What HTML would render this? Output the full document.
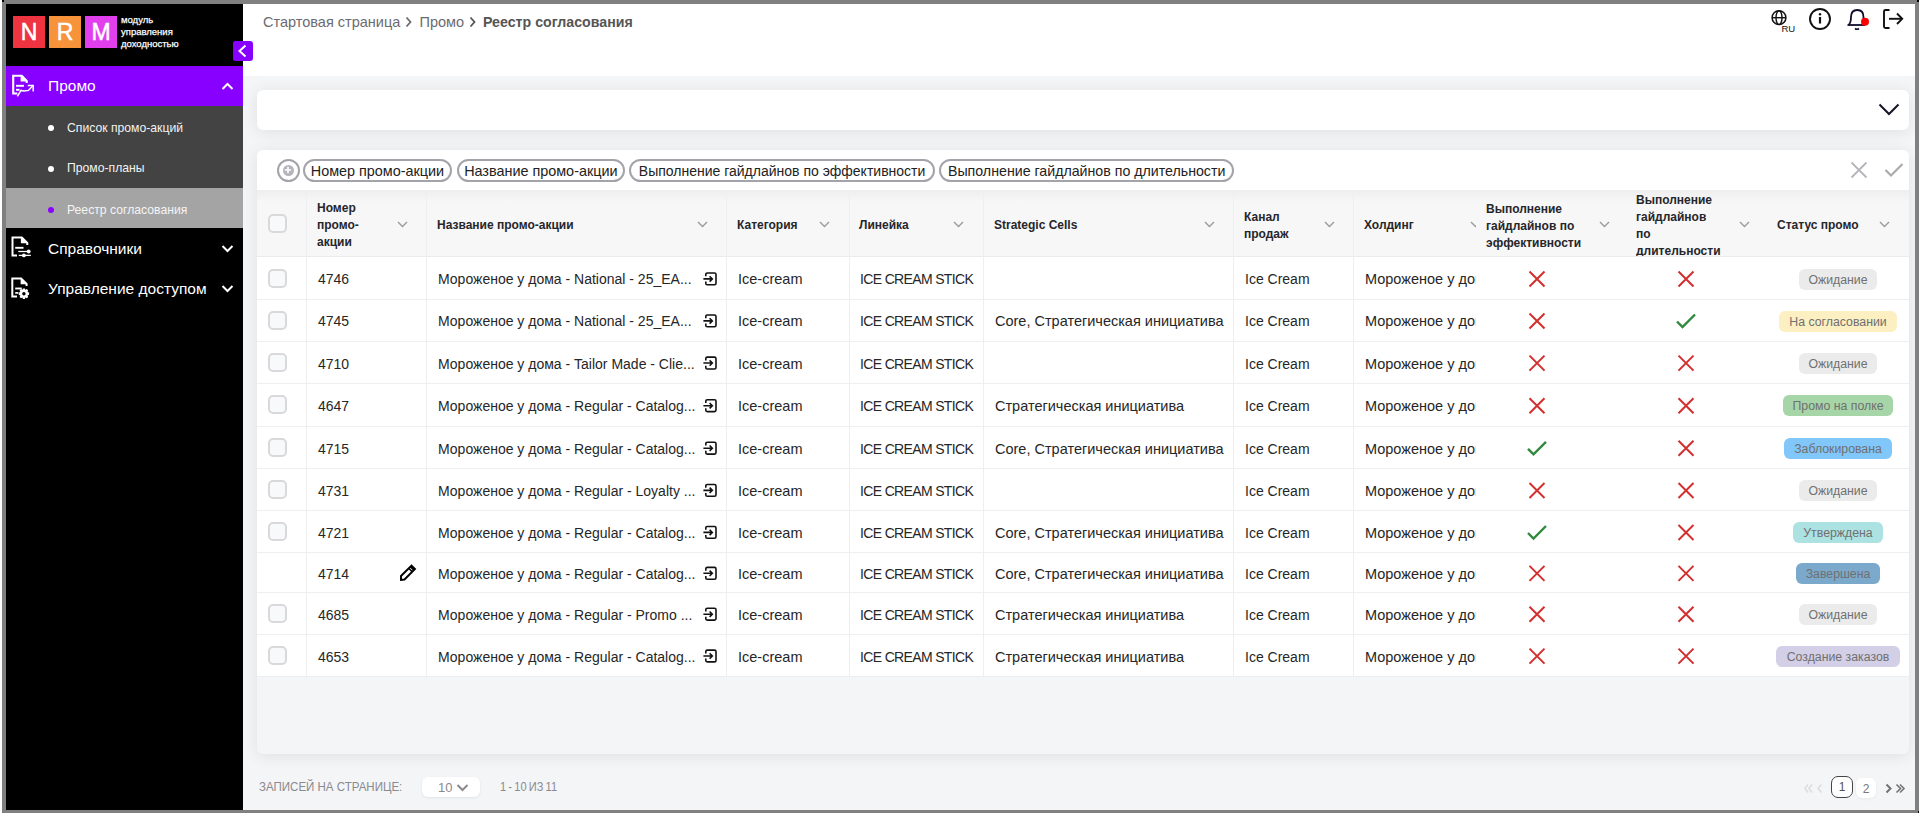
<!DOCTYPE html><html><head><meta charset="utf-8"><style>
*{box-sizing:border-box;margin:0;padding:0}
html,body{width:1920px;height:813px;overflow:hidden;background:#fff;font-family:"Liberation Sans",sans-serif;}
div,span{position:absolute;white-space:nowrap}
svg{position:absolute;overflow:visible}
.logo{top:16px;width:32px;height:32px;color:#fff;font-size:23px;line-height:32px;text-align:center;-webkit-text-stroke:0.5px #fff}
.nav{color:#fff;font-size:15.5px;line-height:18px}
.sub{color:#fff;font-size:12.2px;line-height:15px}
.bullet{width:6px;height:6px;border-radius:50%;background:#fff}
.chip{height:23px;border:2px solid #a3a3aa;border-radius:12px;font-size:14.4px;line-height:20px;color:#222;text-align:center}
.th{font-size:12px;font-weight:bold;line-height:17px;color:#26262b}
.td{font-size:14px;line-height:17px;color:#262626}
.cb{width:19px;height:19px;border:2px solid #d9d9dc;border-radius:5px;background:#f8f9fb}
.badge{height:21px;border-radius:6px;font-size:12.3px;line-height:23px;color:#707070;text-align:center}
</style></head><body>
<div style="left:2px;top:0;width:1917px;height:813px;background:#808080"></div>
<div style="left:6px;top:4px;width:237px;height:806px;background:#000"></div>
<div class="logo" style="left:13px;background:#ee3441">N</div>
<div class="logo" style="left:49px;background:#f7933b">R</div>
<div class="logo" style="left:85px;background:#e13fee">M</div>
<div style="left:121px;top:14px;color:#fff;font-size:9.5px;line-height:12px;-webkit-text-stroke:0.25px #fff">модуль<br>управления<br>доходностью</div>
<div style="left:6px;top:66px;width:237px;height:40px;background:#8800ff"></div>
<div style="left:6px;top:106px;width:237px;height:82px;background:#434343"></div>
<div style="left:6px;top:188px;width:237px;height:40px;background:#a4a4a4"></div>
<div style="left:233px;top:41px;width:20px;height:20px;background:#8800ff;border-radius:3px"></div>
<svg style="left:0;top:0" width="1" height="1"><polyline points="245.5,45.5 239.5,51 245.5,56.5" fill="none" stroke="#fff" stroke-width="2"/></svg>
<svg style="left:10px;top:73px" width="25" height="25" viewBox="0 0 25 25" fill="none" stroke="#fff">
<path d="M7.4 20.5 H3.2 V2.8 H11.8 L16.7 7.9 V10" stroke-width="2.1"/>
<path d="M10.6 3 L12 3 L17.5 8.4 L10.6 8.4 Z" fill="#fff" stroke="none"/>
<path d="M6 12.8 H14" stroke-width="1.9"/><path d="M6 16.8 H9.6" stroke-width="1.9"/>
<polyline points="7.4,23.3 11,17.4 14,17.9 18.5,17.4 23,12.6" stroke-width="1.5"/>
<polyline points="17.8,12.4 23.2,12.4 23.2,18.6" stroke-width="1.5"/>
</svg>
<div class="nav" style="left:48px;top:77px">Промо</div>
<svg style="left:0;top:0" width="1" height="1"><polyline points="222.5,89 227.5,84 232.5,89" fill="none" stroke="#fff" stroke-width="2"/></svg>
<div class="bullet" style="left:48px;top:125.0px;background:#fff"></div>
<div class="sub" style="left:67px;top:120.7px;color:#f2f2f2">Список промо-акций</div>
<div class="bullet" style="left:48px;top:165.5px;background:#fff"></div>
<div class="sub" style="left:67px;top:161.2px;color:#f2f2f2">Промо-планы</div>
<div class="bullet" style="left:48px;top:207.0px;background:#8800ff"></div>
<div class="sub" style="left:67px;top:202.7px;color:#f4f4f4">Реестр согласования</div>
<svg style="left:8px;top:232px" width="28" height="28" viewBox="0 0 28 28" fill="none" stroke="#fff">
<path d="M9 23.6 H4.5 V5.4 H13.8 L19.3 11 V13" stroke-width="2"/>
<path d="M12.9 5.6 L14 5.6 L19.3 11.3 L12.9 11.3 Z" fill="#fff" stroke="none"/>
<path d="M7.2 15.8 H15.5" stroke-width="1.9"/>
<path d="M10.3 19.5 H20" stroke-width="1.3"/><circle cx="20.7" cy="19.5" r="1.9" fill="#fff" stroke="none"/>
<path d="M10.7 23.4 H22.8" stroke-width="1.3"/><circle cx="15.9" cy="23.4" r="1.9" fill="#fff" stroke="none"/>
</svg>
<div class="nav" style="left:48px;top:240px">Справочники</div>
<svg style="left:0;top:0" width="1" height="1"><polyline points="222.5,246 227.5,251 232.5,246" fill="none" stroke="#fff" stroke-width="2"/></svg>
<svg style="left:8px;top:273px" width="28" height="28" viewBox="0 0 28 28" fill="none" stroke="#fff">
<path d="M9 23.6 H4.3 V5.5 H13.1 L18.6 11 V13" stroke-width="2"/>
<path d="M12.6 5.7 L13.5 5.7 L18.8 11.2 L12.6 11.2 Z" fill="#fff" stroke="none"/>
<path d="M7.2 15.5 H13.8" stroke-width="1.9"/><path d="M7.2 19.9 H10.3" stroke-width="1.7"/>
<g transform="translate(15.9,20.7)"><path d="M-1,-5.3 H1 L1.4,-3.9 L2.9,-4.6 L4.3,-3.2 L3.6,-1.7 L5.2,-1.1 V1.1 L3.6,1.7 L4.3,3.2 L2.9,4.6 L1.4,3.9 L1,5.3 H-1 L-1.4,3.9 L-2.9,4.6 L-4.3,3.2 L-3.6,1.7 L-5.2,1.1 V-1.1 L-3.6,-1.7 L-4.3,-3.2 L-2.9,-4.6 L-1.4,-3.9 Z" fill="#fff" stroke="none"/><circle r="1.7" fill="#000" stroke="none"/></g>
</svg>
<div class="nav" style="left:48px;top:280px">Управление доступом</div>
<svg style="left:0;top:0" width="1" height="1"><polyline points="222.5,286 227.5,291 232.5,286" fill="none" stroke="#fff" stroke-width="2"/></svg>
<div style="left:243px;top:4px;width:1672px;height:806px;background:#f4f5f7;overflow:hidden"></div>
<div style="left:243px;top:4px;width:1672px;height:72px;background:#fff"></div>
<div style="left:263px;top:13px;font-size:14.5px;line-height:18px;color:#6b6b70">Стартовая страница</div>
<svg style="left:0;top:0" width="1" height="1"><polyline points="406.5,17.5 410.5,22 406.5,26.5" fill="none" stroke="#6b6b70" stroke-width="1.8"/></svg>
<div style="left:419.5px;top:13px;font-size:14.5px;line-height:18px;color:#6b6b70">Промо</div>
<svg style="left:0;top:0" width="1" height="1"><polyline points="470.5,17.5 474.5,22 470.5,26.5" fill="none" stroke="#555" stroke-width="1.8"/></svg>
<div style="left:483px;top:13px;font-size:14.2px;line-height:18px;color:#555;font-weight:bold">Реестр согласования</div>
<svg style="left:1765px;top:5px" width="150" height="30" viewBox="1765 5 150 30" fill="none" stroke="#111">
<circle cx="1779" cy="17.7" r="6.9" stroke-width="1.5"/><ellipse cx="1779" cy="17.7" rx="3" ry="6.9" stroke-width="1.4"/><path d="M1772.2 17.7 H1785.8" stroke-width="1.4"/>
<circle cx="1820" cy="19" r="10" stroke-width="1.9"/><path d="M1820 17 V23.5" stroke-width="2.2"/><circle cx="1820" cy="14.3" r="1.2" fill="#111" stroke="none"/>
<path d="M1848.5 25 Q1851 23 1851 17 Q1851 10 1857.3 10 Q1863.5 10 1863.5 17 L1863.5 19" stroke="#0d0d2b" stroke-width="1.8"/><path d="M1847.5 25 H1865" stroke="#0d0d2b" stroke-width="1.8"/>
<path d="M1855 28.5 Q1857 30 1859 28.5" stroke="#0d0d2b" stroke-width="1.6"/>
<circle cx="1865" cy="21.8" r="4" fill="#f00" stroke="none"/>
<path d="M1889.5 10 H1885.5 Q1884 10 1884 11.5 V26.5 Q1884 28 1885.5 28 H1889.5" stroke-width="1.9"/>
<path d="M1889 18.8 H1902" stroke-width="1.9"/><polyline points="1897,13.5 1902.2,18.8 1897,24" stroke-width="1.9"/>
</svg>
<div style="left:1781.5px;top:24px;font-size:9.5px;line-height:10px;color:#111">RU</div>
<div style="left:243px;top:76px;width:1672px;height:734px;overflow:hidden"><div style="left:14px;top:14px;width:1652px;height:40px;background:#fff;border-radius:6px;box-shadow:0 2px 16px rgba(0,0,0,.09)"></div><div style="left:14px;top:74px;width:1652px;height:604px;background:#f4f5f7;border-radius:6px;box-shadow:0 2px 16px rgba(0,0,0,.09)"></div></div>
<svg style="left:0;top:0" width="1" height="1"><polyline points="1879.5,104.5 1889,114 1898.5,104.5" fill="none" stroke="#15152a" stroke-width="2"/></svg>
<div style="left:257px;top:150px;width:1652px;height:40px;background:#fff;border-radius:6px 6px 0 0"></div>
<div style="left:257px;top:190px;width:1652px;height:67px;background:linear-gradient(#eeeeef,#f7f7f7 12px,#f7f7f7);border-bottom:1px solid #ebebec"></div>
<div style="left:257px;top:257px;width:1652px;height:419px;background:#fff"></div>
<div style="left:277px;top:159px;width:23px;height:23px;border:2px solid #a3a3aa;border-radius:50%"></div>
<div style="left:282.5px;top:164.5px;width:11px;height:11px;border-radius:50%;background:#b4b4ba"></div>
<svg style="left:0;top:0" width="1" height="1"><path d="M288 166.8 V173.2 M284.8 170 H291.2" stroke="#fff" stroke-width="1.6"/></svg>
<div class="chip" style="left:302.8px;top:159px;width:149.3px;font-size:14.4px">Номер промо-акции</div>
<div class="chip" style="left:456.5px;top:159px;width:168.7px;font-size:14.4px">Название промо-акции</div>
<div class="chip" style="left:629.2px;top:159px;width:305.8px;font-size:14px">Выполнение гайдлайнов по эффективности</div>
<div class="chip" style="left:939.2px;top:159px;width:295.0px;font-size:14.2px">Выполнение гайдлайнов по длительности</div>
<svg style="left:0;top:0" width="1" height="1"><path d="M1851.5 162.5 L1866.5 177.5 M1866.5 162.5 L1851.5 177.5" stroke="#b5b5bc" stroke-width="1.8"/><polyline points="1885.5,170 1891,175.5 1902.5,164" fill="none" stroke="#ababab" stroke-width="2.2"/></svg>
<div style="left:306px;top:190px;width:1px;height:486px;background:#efeff1"></div>
<div style="left:426px;top:190px;width:1px;height:486px;background:#efeff1"></div>
<div style="left:726px;top:190px;width:1px;height:486px;background:#efeff1"></div>
<div style="left:849px;top:190px;width:1px;height:486px;background:#efeff1"></div>
<div style="left:983px;top:190px;width:1px;height:486px;background:#efeff1"></div>
<div style="left:1233px;top:190px;width:1px;height:486px;background:#efeff1"></div>
<div style="left:1353px;top:190px;width:1px;height:486px;background:#efeff1"></div>
<div class="cb" style="left:268px;top:214px"></div>
<div class="th" style="left:317px;top:200.0px">Номер<br>промо-<br>акции</div>
<div class="th" style="left:437px;top:217.0px">Название промо-акции</div>
<div class="th" style="left:737px;top:217.0px">Категория</div>
<div class="th" style="left:859px;top:217.0px">Линейка</div>
<div class="th" style="left:994px;top:217.0px">Strategic Cells</div>
<div class="th" style="left:1244px;top:208.5px">Канал<br>продаж</div>
<div class="th" style="left:1364px;top:217.0px">Холдинг</div>
<svg style="left:0;top:0" width="1" height="1"><polyline points="398,222 402.5,226.5 407,222" fill="none" stroke="#9a9aa0" stroke-width="1.4"/></svg>
<svg style="left:0;top:0" width="1" height="1"><polyline points="698,222 702.5,226.5 707,222" fill="none" stroke="#9a9aa0" stroke-width="1.4"/></svg>
<svg style="left:0;top:0" width="1" height="1"><polyline points="820,222 824.5,226.5 829,222" fill="none" stroke="#9a9aa0" stroke-width="1.4"/></svg>
<svg style="left:0;top:0" width="1" height="1"><polyline points="954,222 958.5,226.5 963,222" fill="none" stroke="#9a9aa0" stroke-width="1.4"/></svg>
<svg style="left:0;top:0" width="1" height="1"><polyline points="1205,222 1209.5,226.5 1214,222" fill="none" stroke="#9a9aa0" stroke-width="1.4"/></svg>
<svg style="left:0;top:0" width="1" height="1"><polyline points="1325,222 1329.5,226.5 1334,222" fill="none" stroke="#9a9aa0" stroke-width="1.4"/></svg>
<div class="th" style="left:1486px;top:200.5px">Выполнение<br>гайдлайнов по<br>эффективности</div>
<div class="th" style="left:1636px;top:190px;height:66px;overflow:hidden"><div style="position:relative;top:1.5px">Выполнение<br>гайдлайнов<br>по<br>длительности</div></div>
<div class="th" style="left:1777px;top:217px">Статус промо</div>
<svg style="left:0;top:0" width="1" height="1"><polyline points="1600,222 1604.5,226.5 1609,222" fill="none" stroke="#9a9aa0" stroke-width="1.4"/></svg>
<svg style="left:0;top:0" width="1" height="1"><polyline points="1740,222 1744.5,226.5 1749,222" fill="none" stroke="#9a9aa0" stroke-width="1.4"/></svg>
<svg style="left:0;top:0" width="1" height="1"><polyline points="1880,222 1884.5,226.5 1889,222" fill="none" stroke="#9a9aa0" stroke-width="1.4"/></svg>
<div style="left:1470px;top:215px;width:6px;height:15px;overflow:hidden"><svg style="left:0;top:0" width="1" height="1"><polyline points="1,7 5.5,11.5 10,7" fill="none" stroke="#9a9aa0" stroke-width="1.4"/></svg></div>
<div style="left:257px;top:299px;width:1652px;height:1px;background:#efeff1"></div>
<div class="cb" style="left:268px;top:268.5px"></div>
<div class="td" style="left:318px;top:271.4px">4746</div>
<div class="td" style="left:438px;top:271.4px">Мороженое у дома - National - 25_EA...</div>
<svg style="left:0;top:0" width="1" height="1"><path d="M705.8 276.29999999999995 V274.29999999999995 Q705.8 273.0 707.3 273.0 H714.5 Q716 273.0 716 274.5 V283.29999999999995 Q716 284.79999999999995 714.5 284.79999999999995 H707.3 Q705.8 284.79999999999995 705.8 283.5 V281.5 M703.4 278.9 H712 M709.6 276.2 L712.3 278.9 L709.6 281.59999999999997" fill="none" stroke="#111" stroke-width="1.6"/></svg>
<div class="td" style="left:738px;top:271.4px;font-size:14.5px">Ice-cream</div>
<div class="td" style="left:860px;top:271.4px;letter-spacing:-0.65px">ICE CREAM STICK</div>
<div class="td" style="left:1245px;top:271.4px">Ice Cream</div>
<div style="left:1365px;top:271.4px;width:111px;height:20px;overflow:hidden"><div class="td" style="left:0;top:0;font-size:14.5px">Мороженое у дома</div></div>
<svg style="left:0;top:0" width="1" height="1"><path d="M1529.5 271.5 L1544.5 286.5 M1544.5 271.5 L1529.5 286.5" stroke="#d32f2f" stroke-width="2"/></svg>
<svg style="left:0;top:0" width="1" height="1"><path d="M1678.5 271.5 L1693.5 286.5 M1693.5 271.5 L1678.5 286.5" stroke="#d32f2f" stroke-width="2"/></svg>
<div class="badge" style="left:1799.0px;top:268.5px;width:78px;background:#ebebeb">Ожидание</div>
<div style="left:257px;top:341px;width:1652px;height:1px;background:#efeff1"></div>
<div class="cb" style="left:268px;top:310.5px"></div>
<div class="td" style="left:318px;top:313.4px">4745</div>
<div class="td" style="left:438px;top:313.4px">Мороженое у дома - National - 25_EA...</div>
<svg style="left:0;top:0" width="1" height="1"><path d="M705.8 318.29999999999995 V316.29999999999995 Q705.8 315.0 707.3 315.0 H714.5 Q716 315.0 716 316.5 V325.29999999999995 Q716 326.79999999999995 714.5 326.79999999999995 H707.3 Q705.8 326.79999999999995 705.8 325.5 V323.5 M703.4 320.9 H712 M709.6 318.2 L712.3 320.9 L709.6 323.59999999999997" fill="none" stroke="#111" stroke-width="1.6"/></svg>
<div class="td" style="left:738px;top:313.4px;font-size:14.5px">Ice-cream</div>
<div class="td" style="left:860px;top:313.4px;letter-spacing:-0.65px">ICE CREAM STICK</div>
<div class="td" style="left:995px;top:313.4px;font-size:14.5px">Core, Стратегическая инициатива</div>
<div class="td" style="left:1245px;top:313.4px">Ice Cream</div>
<div style="left:1365px;top:313.4px;width:111px;height:20px;overflow:hidden"><div class="td" style="left:0;top:0;font-size:14.5px">Мороженое у дома</div></div>
<svg style="left:0;top:0" width="1" height="1"><path d="M1529.5 313.5 L1544.5 328.5 M1544.5 313.5 L1529.5 328.5" stroke="#d32f2f" stroke-width="2"/></svg>
<svg style="left:0;top:0" width="1" height="1"><polyline points="1677,321.5 1682.5,327.0 1695,314.5" fill="none" stroke="#2f8a3e" stroke-width="2.4"/></svg>
<div class="badge" style="left:1779.0px;top:310.5px;width:118px;background:#fcefc2">На согласовании</div>
<div style="left:257px;top:383px;width:1652px;height:1px;background:#efeff1"></div>
<div class="cb" style="left:268px;top:352.6px"></div>
<div class="td" style="left:318px;top:355.54999999999995px">4710</div>
<div class="td" style="left:438px;top:355.54999999999995px">Мороженое у дома - Tailor Made - Clie...</div>
<svg style="left:0;top:0" width="1" height="1"><path d="M705.8 360.44999999999993 V358.44999999999993 Q705.8 357.15 707.3 357.15 H714.5 Q716 357.15 716 358.65 V367.44999999999993 Q716 368.94999999999993 714.5 368.94999999999993 H707.3 Q705.8 368.94999999999993 705.8 367.65 V365.65 M703.4 363.04999999999995 H712 M709.6 360.34999999999997 L712.3 363.04999999999995 L709.6 365.74999999999994" fill="none" stroke="#111" stroke-width="1.6"/></svg>
<div class="td" style="left:738px;top:355.54999999999995px;font-size:14.5px">Ice-cream</div>
<div class="td" style="left:860px;top:355.54999999999995px;letter-spacing:-0.65px">ICE CREAM STICK</div>
<div class="td" style="left:1245px;top:355.54999999999995px">Ice Cream</div>
<div style="left:1365px;top:355.54999999999995px;width:111px;height:20px;overflow:hidden"><div class="td" style="left:0;top:0;font-size:14.5px">Мороженое у дома</div></div>
<svg style="left:0;top:0" width="1" height="1"><path d="M1529.5 355.65 L1544.5 370.65 M1544.5 355.65 L1529.5 370.65" stroke="#d32f2f" stroke-width="2"/></svg>
<svg style="left:0;top:0" width="1" height="1"><path d="M1678.5 355.65 L1693.5 370.65 M1693.5 355.65 L1678.5 370.65" stroke="#d32f2f" stroke-width="2"/></svg>
<div class="badge" style="left:1799.0px;top:352.65px;width:78px;background:#ebebeb">Ожидание</div>
<div style="left:257px;top:426px;width:1652px;height:1px;background:#efeff1"></div>
<div class="cb" style="left:268px;top:395.3px"></div>
<div class="td" style="left:318px;top:398.2px">4647</div>
<div class="td" style="left:438px;top:398.2px">Мороженое у дома - Regular - Catalog...</div>
<svg style="left:0;top:0" width="1" height="1"><path d="M705.8 403.09999999999997 V401.09999999999997 Q705.8 399.8 707.3 399.8 H714.5 Q716 399.8 716 401.3 V410.09999999999997 Q716 411.59999999999997 714.5 411.59999999999997 H707.3 Q705.8 411.59999999999997 705.8 410.3 V408.3 M703.4 405.7 H712 M709.6 403.0 L712.3 405.7 L709.6 408.4" fill="none" stroke="#111" stroke-width="1.6"/></svg>
<div class="td" style="left:738px;top:398.2px;font-size:14.5px">Ice-cream</div>
<div class="td" style="left:860px;top:398.2px;letter-spacing:-0.65px">ICE CREAM STICK</div>
<div class="td" style="left:995px;top:398.2px;font-size:14.5px">Стратегическая инициатива</div>
<div class="td" style="left:1245px;top:398.2px">Ice Cream</div>
<div style="left:1365px;top:398.2px;width:111px;height:20px;overflow:hidden"><div class="td" style="left:0;top:0;font-size:14.5px">Мороженое у дома</div></div>
<svg style="left:0;top:0" width="1" height="1"><path d="M1529.5 398.3 L1544.5 413.3 M1544.5 398.3 L1529.5 413.3" stroke="#d32f2f" stroke-width="2"/></svg>
<svg style="left:0;top:0" width="1" height="1"><path d="M1678.5 398.3 L1693.5 413.3 M1693.5 398.3 L1678.5 413.3" stroke="#d32f2f" stroke-width="2"/></svg>
<div class="badge" style="left:1783.0px;top:395.3px;width:110px;background:#a6d5a8">Промо на полке</div>
<div style="left:257px;top:468px;width:1652px;height:1px;background:#efeff1"></div>
<div class="cb" style="left:268px;top:437.8px"></div>
<div class="td" style="left:318px;top:440.7px">4715</div>
<div class="td" style="left:438px;top:440.7px">Мороженое у дома - Regular - Catalog...</div>
<svg style="left:0;top:0" width="1" height="1"><path d="M705.8 445.59999999999997 V443.59999999999997 Q705.8 442.3 707.3 442.3 H714.5 Q716 442.3 716 443.8 V452.59999999999997 Q716 454.09999999999997 714.5 454.09999999999997 H707.3 Q705.8 454.09999999999997 705.8 452.8 V450.8 M703.4 448.2 H712 M709.6 445.5 L712.3 448.2 L709.6 450.9" fill="none" stroke="#111" stroke-width="1.6"/></svg>
<div class="td" style="left:738px;top:440.7px;font-size:14.5px">Ice-cream</div>
<div class="td" style="left:860px;top:440.7px;letter-spacing:-0.65px">ICE CREAM STICK</div>
<div class="td" style="left:995px;top:440.7px;font-size:14.5px">Core, Стратегическая инициатива</div>
<div class="td" style="left:1245px;top:440.7px">Ice Cream</div>
<div style="left:1365px;top:440.7px;width:111px;height:20px;overflow:hidden"><div class="td" style="left:0;top:0;font-size:14.5px">Мороженое у дома</div></div>
<svg style="left:0;top:0" width="1" height="1"><polyline points="1528,448.8 1533.5,454.3 1546,441.8" fill="none" stroke="#2f8a3e" stroke-width="2.4"/></svg>
<svg style="left:0;top:0" width="1" height="1"><path d="M1678.5 440.8 L1693.5 455.8 M1693.5 440.8 L1678.5 455.8" stroke="#d32f2f" stroke-width="2"/></svg>
<div class="badge" style="left:1784.0px;top:437.8px;width:108px;background:#81c7f9">Заблокирована</div>
<div style="left:257px;top:510px;width:1652px;height:1px;background:#efeff1"></div>
<div class="cb" style="left:268px;top:480.0px"></div>
<div class="td" style="left:318px;top:482.85px">4731</div>
<div class="td" style="left:438px;top:482.85px">Мороженое у дома - Regular - Loyalty ...</div>
<svg style="left:0;top:0" width="1" height="1"><path d="M705.8 487.75 V485.75 Q705.8 484.45000000000005 707.3 484.45000000000005 H714.5 Q716 484.45000000000005 716 485.95000000000005 V494.75 Q716 496.25 714.5 496.25 H707.3 Q705.8 496.25 705.8 494.95000000000005 V492.95000000000005 M703.4 490.35 H712 M709.6 487.65000000000003 L712.3 490.35 L709.6 493.05" fill="none" stroke="#111" stroke-width="1.6"/></svg>
<div class="td" style="left:738px;top:482.85px;font-size:14.5px">Ice-cream</div>
<div class="td" style="left:860px;top:482.85px;letter-spacing:-0.65px">ICE CREAM STICK</div>
<div class="td" style="left:1245px;top:482.85px">Ice Cream</div>
<div style="left:1365px;top:482.85px;width:111px;height:20px;overflow:hidden"><div class="td" style="left:0;top:0;font-size:14.5px">Мороженое у дома</div></div>
<svg style="left:0;top:0" width="1" height="1"><path d="M1529.5 482.95000000000005 L1544.5 497.95000000000005 M1544.5 482.95000000000005 L1529.5 497.95000000000005" stroke="#d32f2f" stroke-width="2"/></svg>
<svg style="left:0;top:0" width="1" height="1"><path d="M1678.5 482.95000000000005 L1693.5 497.95000000000005 M1693.5 482.95000000000005 L1678.5 497.95000000000005" stroke="#d32f2f" stroke-width="2"/></svg>
<div class="badge" style="left:1799.0px;top:479.95000000000005px;width:78px;background:#ebebeb">Ожидание</div>
<div style="left:257px;top:552px;width:1652px;height:1px;background:#efeff1"></div>
<div class="cb" style="left:268px;top:522.0px"></div>
<div class="td" style="left:318px;top:524.9px">4721</div>
<div class="td" style="left:438px;top:524.9px">Мороженое у дома - Regular - Catalog...</div>
<svg style="left:0;top:0" width="1" height="1"><path d="M705.8 529.8 V527.8 Q705.8 526.5 707.3 526.5 H714.5 Q716 526.5 716 528.0 V536.8 Q716 538.3 714.5 538.3 H707.3 Q705.8 538.3 705.8 537.0 V535.0 M703.4 532.4 H712 M709.6 529.6999999999999 L712.3 532.4 L709.6 535.1" fill="none" stroke="#111" stroke-width="1.6"/></svg>
<div class="td" style="left:738px;top:524.9px;font-size:14.5px">Ice-cream</div>
<div class="td" style="left:860px;top:524.9px;letter-spacing:-0.65px">ICE CREAM STICK</div>
<div class="td" style="left:995px;top:524.9px;font-size:14.5px">Core, Стратегическая инициатива</div>
<div class="td" style="left:1245px;top:524.9px">Ice Cream</div>
<div style="left:1365px;top:524.9px;width:111px;height:20px;overflow:hidden"><div class="td" style="left:0;top:0;font-size:14.5px">Мороженое у дома</div></div>
<svg style="left:0;top:0" width="1" height="1"><polyline points="1528,533.0 1533.5,538.5 1546,526.0" fill="none" stroke="#2f8a3e" stroke-width="2.4"/></svg>
<svg style="left:0;top:0" width="1" height="1"><path d="M1678.5 525.0 L1693.5 540.0 M1693.5 525.0 L1678.5 540.0" stroke="#d32f2f" stroke-width="2"/></svg>
<div class="badge" style="left:1793.0px;top:522.0px;width:90px;background:#ade2e2">Утверждена</div>
<div style="left:257px;top:592px;width:1652px;height:1px;background:#efeff1"></div>
<svg style="left:0;top:0" width="1" height="1"><path d="M401 580 V576 L411.5 565.5 L415 569 L404.5 579.5 Z" fill="none" stroke="#000" stroke-width="1.9" stroke-linejoin="miter"/><path d="M409.8 567.2 L411.5 565.5 L415 569 L413.3 570.7 Z" fill="#000"/><path d="M408.7 568.3 L412.2 571.8" stroke="#000" stroke-width="1.6"/></svg>
<div class="td" style="left:318px;top:565.8px">4714</div>
<div class="td" style="left:438px;top:565.8px">Мороженое у дома - Regular - Catalog...</div>
<svg style="left:0;top:0" width="1" height="1"><path d="M705.8 570.6999999999999 V568.6999999999999 Q705.8 567.4 707.3 567.4 H714.5 Q716 567.4 716 568.9 V577.6999999999999 Q716 579.1999999999999 714.5 579.1999999999999 H707.3 Q705.8 579.1999999999999 705.8 577.9 V575.9 M703.4 573.3 H712 M709.6 570.5999999999999 L712.3 573.3 L709.6 576.0" fill="none" stroke="#111" stroke-width="1.6"/></svg>
<div class="td" style="left:738px;top:565.8px;font-size:14.5px">Ice-cream</div>
<div class="td" style="left:860px;top:565.8px;letter-spacing:-0.65px">ICE CREAM STICK</div>
<div class="td" style="left:995px;top:565.8px;font-size:14.5px">Core, Стратегическая инициатива</div>
<div class="td" style="left:1245px;top:565.8px">Ice Cream</div>
<div style="left:1365px;top:565.8px;width:111px;height:20px;overflow:hidden"><div class="td" style="left:0;top:0;font-size:14.5px">Мороженое у дома</div></div>
<svg style="left:0;top:0" width="1" height="1"><path d="M1529.5 565.9 L1544.5 580.9 M1544.5 565.9 L1529.5 580.9" stroke="#d32f2f" stroke-width="2"/></svg>
<svg style="left:0;top:0" width="1" height="1"><path d="M1678.5 565.9 L1693.5 580.9 M1693.5 565.9 L1678.5 580.9" stroke="#d32f2f" stroke-width="2"/></svg>
<div class="badge" style="left:1796.0px;top:562.9px;width:84px;background:#7aa9cc">Завершена</div>
<div style="left:257px;top:634px;width:1652px;height:1px;background:#efeff1"></div>
<div class="cb" style="left:268px;top:603.8px"></div>
<div class="td" style="left:318px;top:606.6999999999999px">4685</div>
<div class="td" style="left:438px;top:606.6999999999999px">Мороженое у дома - Regular - Promo ...</div>
<svg style="left:0;top:0" width="1" height="1"><path d="M705.8 611.5999999999999 V609.5999999999999 Q705.8 608.3 707.3 608.3 H714.5 Q716 608.3 716 609.8 V618.5999999999999 Q716 620.0999999999999 714.5 620.0999999999999 H707.3 Q705.8 620.0999999999999 705.8 618.8 V616.8 M703.4 614.1999999999999 H712 M709.6 611.4999999999999 L712.3 614.1999999999999 L709.6 616.9" fill="none" stroke="#111" stroke-width="1.6"/></svg>
<div class="td" style="left:738px;top:606.6999999999999px;font-size:14.5px">Ice-cream</div>
<div class="td" style="left:860px;top:606.6999999999999px;letter-spacing:-0.65px">ICE CREAM STICK</div>
<div class="td" style="left:995px;top:606.6999999999999px;font-size:14.5px">Стратегическая инициатива</div>
<div class="td" style="left:1245px;top:606.6999999999999px">Ice Cream</div>
<div style="left:1365px;top:606.6999999999999px;width:111px;height:20px;overflow:hidden"><div class="td" style="left:0;top:0;font-size:14.5px">Мороженое у дома</div></div>
<svg style="left:0;top:0" width="1" height="1"><path d="M1529.5 606.8 L1544.5 621.8 M1544.5 606.8 L1529.5 621.8" stroke="#d32f2f" stroke-width="2"/></svg>
<svg style="left:0;top:0" width="1" height="1"><path d="M1678.5 606.8 L1693.5 621.8 M1693.5 606.8 L1678.5 621.8" stroke="#d32f2f" stroke-width="2"/></svg>
<div class="badge" style="left:1799.0px;top:603.8px;width:78px;background:#ebebeb">Ожидание</div>
<div style="left:257px;top:676px;width:1652px;height:1px;background:#efeff1"></div>
<div class="cb" style="left:268px;top:645.6px"></div>
<div class="td" style="left:318px;top:648.5px">4653</div>
<div class="td" style="left:438px;top:648.5px">Мороженое у дома - Regular - Catalog...</div>
<svg style="left:0;top:0" width="1" height="1"><path d="M705.8 653.4 V651.4 Q705.8 650.1 707.3 650.1 H714.5 Q716 650.1 716 651.6 V660.4 Q716 661.9 714.5 661.9 H707.3 Q705.8 661.9 705.8 660.6 V658.6 M703.4 656.0 H712 M709.6 653.3 L712.3 656.0 L709.6 658.7" fill="none" stroke="#111" stroke-width="1.6"/></svg>
<div class="td" style="left:738px;top:648.5px;font-size:14.5px">Ice-cream</div>
<div class="td" style="left:860px;top:648.5px;letter-spacing:-0.65px">ICE CREAM STICK</div>
<div class="td" style="left:995px;top:648.5px;font-size:14.5px">Стратегическая инициатива</div>
<div class="td" style="left:1245px;top:648.5px">Ice Cream</div>
<div style="left:1365px;top:648.5px;width:111px;height:20px;overflow:hidden"><div class="td" style="left:0;top:0;font-size:14.5px">Мороженое у дома</div></div>
<svg style="left:0;top:0" width="1" height="1"><path d="M1529.5 648.6 L1544.5 663.6 M1544.5 648.6 L1529.5 663.6" stroke="#d32f2f" stroke-width="2"/></svg>
<svg style="left:0;top:0" width="1" height="1"><path d="M1678.5 648.6 L1693.5 663.6 M1693.5 648.6 L1678.5 663.6" stroke="#d32f2f" stroke-width="2"/></svg>
<div class="badge" style="left:1776.0px;top:645.6px;width:124px;background:#d3cfe7">Создание заказов</div>
<div style="left:259px;top:779px;font-size:13px;line-height:16px;color:#8a8a8f;transform:scaleX(0.886);transform-origin:0 0">ЗАПИСЕЙ НА СТРАНИЦЕ:</div>
<div style="left:422px;top:777px;width:58px;height:20px;background:#fff;border-radius:6px;box-shadow:0 1px 3px rgba(0,0,0,.08)"></div>
<div style="left:438px;top:779.5px;font-size:13px;line-height:16px;color:#8a8a8f">10</div>
<svg style="left:0;top:0" width="1" height="1"><polyline points="457.5,785 462.5,790 467.5,785" fill="none" stroke="#8a8a8f" stroke-width="2"/></svg>
<div style="left:500px;top:779px;font-size:13px;line-height:16px;color:#8a8a8f;word-spacing:-1px;transform:scaleX(0.85);transform-origin:0 0">1 - 10 ИЗ 11</div>
<svg style="left:0;top:0" width="1" height="1"><polyline points="1808,784.5 1805,788.5 1808,792.5" fill="none" stroke="#dcdcdf" stroke-width="1.5"/><polyline points="1812,784.5 1809,788.5 1812,792.5" fill="none" stroke="#dcdcdf" stroke-width="1.5"/><polyline points="1821.5,784.5 1818,788.5 1821.5,792.5" fill="none" stroke="#dcdcdf" stroke-width="1.5"/></svg>
<div style="left:1831px;top:776px;width:22px;height:22px;border:1.5px solid #444;border-radius:7px;background:#fff;font-size:12px;line-height:21px;text-align:center;color:#555">1</div>
<div style="left:1856px;top:777.5px;width:20px;height:20px;border-radius:6px;background:#fff;box-shadow:0 1px 3px rgba(0,0,0,.06);font-size:12px;line-height:22px;text-align:center;color:#777">2</div>
<svg style="left:0;top:0" width="1" height="1"><polyline points="1886.5,784.5 1890.5,788.5 1886.5,792.5" fill="none" stroke="#737373" stroke-width="2"/><polyline points="1896.5,784.5 1900.5,788.5 1896.5,792.5" fill="none" stroke="#737373" stroke-width="1.6"/><polyline points="1900,784.5 1904,788.5 1900,792.5" fill="none" stroke="#737373" stroke-width="1.6"/></svg>
<div style="left:2px;top:0;width:2px;height:2px;background:#000"></div>
<div style="left:1917px;top:0;width:2px;height:2px;background:#000"></div>
<div style="left:1918px;top:811px;width:1px;height:2px;background:#000"></div>
<div style="left:233px;top:41px;width:20px;height:20px;background:#8800ff;border-radius:3px"></div>
<svg style="left:0;top:0" width="1" height="1"><polyline points="245.5,45.5 239.5,51 245.5,56.5" fill="none" stroke="#fff" stroke-width="2"/></svg>
</body></html>
